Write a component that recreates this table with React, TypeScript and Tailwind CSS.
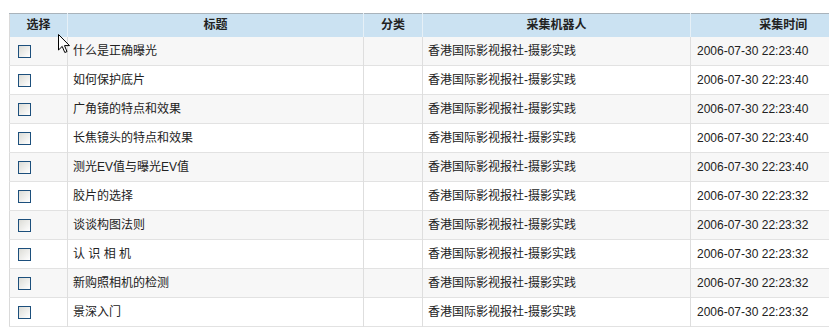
import React from 'react';

const rows = [
  { title: '什么是正确曝光', time: '2006-07-30 22:23:40' },
  { title: '如何保护底片', time: '2006-07-30 22:23:40' },
  { title: '广角镜的特点和效果', time: '2006-07-30 22:23:40' },
  { title: '长焦镜头的特点和效果', time: '2006-07-30 22:23:40' },
  { title: '测光EV值与曝光EV值', time: '2006-07-30 22:23:40' },
  { title: '胶片的选择', time: '2006-07-30 22:23:32' },
  { title: '谈谈构图法则', time: '2006-07-30 22:23:32' },
  { title: '认 识 相 机', time: '2006-07-30 22:23:32' },
  { title: '新购照相机的检测', time: '2006-07-30 22:23:32' },
  { title: '景深入门', time: '2006-07-30 22:23:32' },
];

const Checkbox = () => (
  <span className="inline-block w-[13px] h-[13px] border border-[#1c4f7c] bg-gradient-to-br from-[#dcdcd6] to-[#ffffff] align-middle" />
);

export default function App() {
  return (
    <div
      className="relative w-[829px] h-[328px] overflow-hidden bg-white pt-[13px] pl-[9px] text-[12px] text-[#222]"
      style={{ fontFamily: '"Liberation Sans", "Noto Sans CJK SC", sans-serif' }}
    >
      <table className="w-[866px] border-collapse table-fixed border-t border-t-[#a9b3bb] border-l border-l-[#dadada]">
        <colgroup>
          <col className="w-[58px]" />
          <col className="w-[296px]" />
          <col className="w-[59px]" />
          <col className="w-[268px]" />
          <col className="w-[185px]" />
        </colgroup>
        <thead>
          <tr className="h-[23px] bg-[#cbe2f2] font-bold text-[#222]">
            <th className="border-r border-r-[#e6f0f7] text-center p-0">选择</th>
            <th className="border-r border-r-[#e6f0f7] text-center p-0">标题</th>
            <th className="border-r border-r-[#e6f0f7] text-center p-0">分类</th>
            <th className="border-r border-r-[#e6f0f7] text-center p-0">采集机器人</th>
            <th className="text-center p-0">采集时间</th>
          </tr>
        </thead>
        <tbody>
          {rows.map((r, i) => (
            <tr key={i} className={`h-[29px] border-b border-b-[#e2e2e2] ${i % 2 === 0 ? 'bg-[#f7f7f7]' : 'bg-white'}`}>
              <td className="border-r border-r-[#dedede] pl-[8px] p-0">
                <Checkbox />
              </td>
              <td className="border-r border-r-[#dedede] pl-[5px] p-0 whitespace-nowrap">{r.title}</td>
              <td className="border-r border-r-[#dedede] p-0"></td>
              <td className="border-r border-r-[#dedede] pl-[5px] p-0 whitespace-nowrap">香港国际影视报社-摄影实践</td>
              <td className="pl-[6px] p-0 whitespace-nowrap">{r.time}</td>
            </tr>
          ))}
        </tbody>
      </table>
      <svg className="absolute left-[58px] top-[34px]" width="13" height="20" viewBox="0 0 13 20">
        <path d="M0.5 0.5 L0.5 16 L4.2 12.4 L6.8 18.5 L9 17.6 L6.5 11.6 L11.5 11.6 Z" fill="#fff" stroke="#000" strokeWidth="1" />
      </svg>
    </div>
  );
}
